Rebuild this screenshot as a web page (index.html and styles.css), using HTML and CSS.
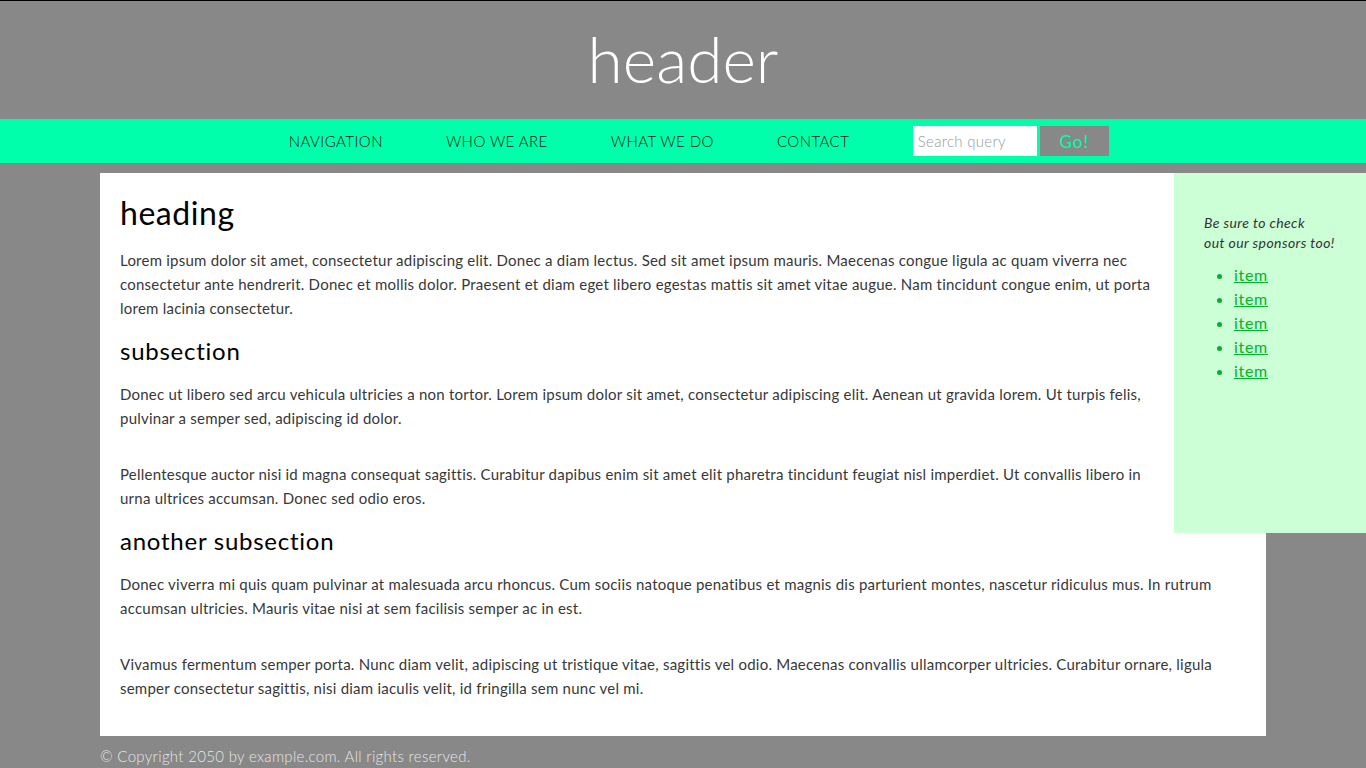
FILE: index.html
```html
<!DOCTYPE html>
<html lang="en">
<head>
<meta charset="utf-8">
<title>header</title>
<link rel="stylesheet" href="styles.css">
</head>
<body>
<header class="site-header">
  <h1 class="site-title">header</h1>
</header>
<nav class="site-nav">
  <a class="nav-link" href="#">Navigation</a>
  <a class="nav-link" href="#">Who we are</a>
  <a class="nav-link" href="#">What we do</a>
  <a class="nav-link" href="#">Contact</a>
  <form class="search">
    <input class="search-input" type="text" placeholder="Search query">
    <button class="search-btn" type="button">Go!</button>
  </form>
</nav>
<main class="content">
  <aside class="sponsors">
    <p class="sponsors-note">Be sure to check<br>out our sponsors too!</p>
    <ul class="sponsors-list">
      <li><a href="#">item</a></li>
      <li><a href="#">item</a></li>
      <li><a href="#">item</a></li>
      <li><a href="#">item</a></li>
      <li><a href="#">item</a></li>
    </ul>
  </aside>
  <h1 class="heading">heading</h1>
  <p class="text">Lorem ipsum dolor sit amet, consectetur adipiscing elit. Donec a diam lectus. Sed sit amet ipsum mauris. Maecenas congue ligula ac quam viverra nec consectetur ante hendrerit. Donec et mollis dolor. Praesent et diam eget libero egestas mattis sit amet vitae augue. Nam tincidunt congue enim, ut porta lorem lacinia consectetur.</p>
  <h2 class="subheading">subsection</h2>
  <p class="text">Donec ut libero sed arcu vehicula ultricies a non tortor. Lorem ipsum dolor sit amet, consectetur adipiscing elit. Aenean ut gravida lorem. Ut turpis felis, pulvinar a semper sed, adipiscing id dolor.</p>
  <p class="text">Pellentesque auctor nisi id magna consequat sagittis. Curabitur dapibus enim sit amet elit pharetra tincidunt feugiat nisl imperdiet. Ut convallis libero in urna ultrices accumsan. Donec sed odio eros.</p>
  <h2 class="subheading">another subsection</h2>
  <p class="text">Donec viverra mi quis quam pulvinar at malesuada arcu rhoncus. Cum sociis natoque penatibus et magnis dis parturient montes, nascetur ridiculus mus. In rutrum accumsan ultricies. Mauris vitae nisi at sem facilisis semper ac in est.</p>
  <p class="text">Vivamus fermentum semper porta. Nunc diam velit, adipiscing ut tristique vitae, sagittis vel odio. Maecenas convallis ullamcorper ultricies. Curabitur ornare, ligula semper consectetur sagittis, nisi diam iaculis velit, id fringilla sem nunc vel mi.</p>
</main>
<footer class="site-footer">© Copyright 2050 by example.com. All rights reserved.</footer>
</body>
</html>
```
FILE: styles.css
```css
* { box-sizing: border-box; }
html, body { margin: 0; padding: 0; }
body {
  background: #888888;
  font-family: Lato, "Liberation Sans", sans-serif;
  font-variant-ligatures: none;
  color: #383838;
  border-top: 1px solid #000;
  min-height: 768px;
}
.site-header {
  height: 118px;
  display: flex;
  align-items: center;
  justify-content: center;
}
.site-title {
  margin: 0;
  font-weight: 300;
  font-size: 64px;
  line-height: 1;
  color: #fff;
  padding-bottom: 2px;
}
.site-nav {
  height: 44px;
  background: #00ffaa;
  display: flex;
  align-items: center;
  justify-content: center;
}
.nav-link {
  padding: 0 31.5px;
  font-size: 15px;
  font-weight: 300;
  letter-spacing: 0.45px;
  text-transform: uppercase;
  color: #111;
  text-decoration: none;
}
.search {
  display: flex;
  margin: 0 0 0 32px;
  gap: 3px;
}
.search-input {
  width: 124px;
  height: 30px;
  border: none;
  margin: 0;
  padding: 0 5px;
  font-family: Lato, sans-serif;
  font-weight: 300;
  font-size: 15px;
  letter-spacing: 0.3px;
  background: #fff;
  outline: none;
}
.search-input::placeholder { color: #999; }
.search-btn {
  width: 69px;
  height: 30px;
  border: none;
  margin: 0;
  padding: 0;
  background: #888;
  color: #00ffaa;
  font-family: Lato, sans-serif;
  font-size: 17px;
  letter-spacing: 1px;
  font-weight: 400;
}
.content {
  display: flow-root;
  margin: 10px 100px 0;
  background: #fff;
  padding: 21px 20px 20px;
}
.sponsors {
  float: right;
  width: 192px;
  height: 360px;
  margin: -21px -120px 0 20px;
  background: #ccffd6;
  padding: 40px 30px;
}
.sponsors-note {
  margin: 0 0 10px;
  font-style: italic;
  font-size: 14px;
  line-height: 20px;
  letter-spacing: 0.4px;
  color: #333;
}
.sponsors-list {
  margin: 0;
  padding-left: 30px;
  color: #00b22c;
  font-size: 16px;
  line-height: 24px;
  letter-spacing: 0.7px;
}
.sponsors-list a { color: #00b22c; }
.heading {
  margin: 0 0 16px;
  font-size: 32px;
  line-height: 38px;
  font-weight: 400;
  letter-spacing: 0.55px;
  color: #000;
}
.subheading {
  margin: 16px 0;
  font-size: 24px;
  line-height: 30px;
  font-weight: 400;
  letter-spacing: 0.75px;
  color: #000;
}
.text {
  margin: 16px 0;
  font-size: 15px;
  line-height: 24px;
  letter-spacing: 0.23px;
}
.text + .text { margin-top: 32px; }
.site-footer {
  margin: 8px 100px 0;
  font-size: 15px;
  line-height: 24px;
  font-weight: 300;
  letter-spacing: 0.32px;
  color: #e6e6e6;
}
```
